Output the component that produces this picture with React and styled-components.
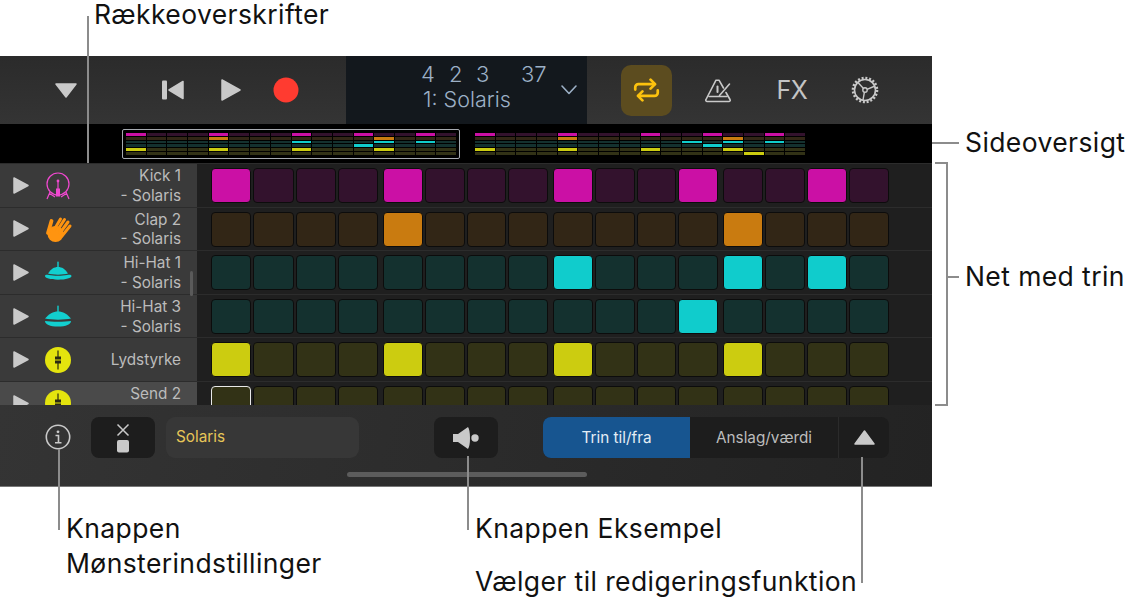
import React from 'react';
import styled, { createGlobalStyle } from 'styled-components';

const GlobalStyle = createGlobalStyle`
  html, body {
    margin: 0;
    padding: 0;
    background: #fff;
    font-family: Inter, "Noto Sans", sans-serif;
  }
`;

const PALETTE = {
  magenta: { on: '#cb10a5', off: '#33122d' },
  orange: { on: '#c97b10', off: '#322616' },
  teal: { on: '#10cccc', off: '#14312f' },
  yellow: { on: '#cccc10', off: '#323216' },
};

const TRACKS = [
  { id: 'kick', lines: ['Kick 1', '- Solaris'], color: 'magenta', icon: 'kick', steps: [0, 4, 8, 11, 14] },
  { id: 'clap', lines: ['Clap 2', '- Solaris'], color: 'orange', icon: 'clap', steps: [4, 12] },
  { id: 'hat1', lines: ['Hi-Hat 1', '- Solaris'], color: 'teal', icon: 'hat', steps: [8, 12, 14] },
  { id: 'hat3', lines: ['Hi-Hat 3', '- Solaris'], color: 'teal', icon: 'hatOpen', steps: [11] },
  { id: 'vol', lines: ['Lydstyrke'], color: 'yellow', icon: 'fader', steps: [0, 4, 8, 12] },
  { id: 'send', lines: ['Send 2', '- Solaris'], color: 'yellow', icon: 'fader', steps: [], selected: true },
];

const OVERVIEW = [
  [
    { color: 'magenta', steps: [0, 4, 8, 11, 14] },
    { color: 'orange', steps: [4, 12] },
    { color: 'teal', steps: [8, 12, 14] },
    { color: 'teal', steps: [11] },
    { color: 'yellow', steps: [0, 4, 8, 12] },
    { color: 'yellow', steps: [] },
  ],
  [
    { color: 'magenta', steps: [0, 4, 8, 11, 14] },
    { color: 'orange', steps: [4, 12] },
    { color: 'teal', steps: [10, 12, 14] },
    { color: 'teal', steps: [11] },
    { color: 'yellow', steps: [0, 4, 8, 12] },
    { color: 'yellow', steps: [13] },
  ],
];

const Page = styled.div`
  position: relative;
  width: 1138px;
  height: 604px;
  overflow: hidden;
  background: #fff;
  color: #111;
`;

const Caption = styled.div`
  font-size: 26.5px;
  letter-spacing: 0.4px;
  line-height: 35px;
  white-space: nowrap;
`;

const TopCaption = styled(Caption)`
  height: 56px;
  padding-left: 94px;
  box-sizing: border-box;
  line-height: 28px;
`;

const Middle = styled.div`
  display: flex;
  height: 430px;
`;

const Device = styled.div`
  width: 932px;
  height: 430px;
  display: flex;
  flex-direction: column;
  background: #1f1f1f;
  box-shadow: 0 1px 0 #777;
`;

const Toolbar = styled.div`
  height: 68px;
  display: flex;
  align-items: center;
  background: linear-gradient(#2b2b2b, #343434);
  flex: none;
`;

const ToolButton = styled.button`
  flex: none;
  width: ${p => p.$w}px;
  margin-left: ${p => p.$ml || 0}px;
  height: 51px;
  padding: 0;
  border: 0;
  border-radius: 10px;
  display: flex;
  align-items: center;
  justify-content: center;
  background: ${p => (p.$active ? '#5c4c1f' : 'transparent')};
  color: #c9c9c9;
  font-family: inherit;
`;

const FxLabel = styled.span`
  font-size: 25px;
  letter-spacing: -0.5px;
  color: #c4c4c4;
`;

const Transport = styled.div`
  flex: none;
  width: 241px;
  height: 68px;
  margin-left: 47px;
  position: relative;
  background: #13181d;
  color: #9cb0c6;
  display: flex;
  flex-direction: column;
  align-items: flex-start;
  justify-content: flex-start;
  padding: 5px 0 0 75px;
  box-sizing: border-box;
`;

const Counter = styled.div`
  display: grid;
  grid-template-columns: 28px 27px 45px auto;
  font-size: 22px;
  line-height: 26px;
  font-weight: 300;
`;

const SongName = styled.div`
  font-size: 21.5px;
  line-height: 25px;
  font-weight: 300;
  margin-left: 2px;
`;

const Chevron = styled.svg`
  position: absolute;
  right: 9px;
  top: 28px;
`;

const OverviewBar = styled.div`
  flex: none;
  height: 39px;
  background: #000;
  display: flex;
  padding-left: 122px;
  gap: 11px;
`;

const OverviewPage = styled.div`
  width: 338px;
  height: 30px;
  margin-top: 5px;
  box-sizing: border-box;
  padding: 3px 3px;
  border: 1px solid ${p => (p.$current ? '#a6aab0' : 'transparent')};
  border-radius: 2px;
  display: flex;
  flex-direction: column;
  gap: 1px;
`;

const OverviewRow = styled.div`
  display: grid;
  grid-template-columns: repeat(16, 1fr);
  gap: 1px;
  height: 3px;
`;

const OverviewCell = styled.div`
  background: ${p => (p.$on ? PALETTE[p.$color].on : PALETTE[p.$color].off)};
`;

const TrackArea = styled.div`
  flex: none;
  height: 242px;
  overflow: hidden;
  position: relative;
`;

const TrackRow = styled.div`
  height: 43.6px;
  display: flex;
  box-sizing: border-box;
  border-top: 1px solid #2c2c2c;
`;

const RowHeader = styled.div`
  flex: none;
  width: 197px;
  height: 100%;
  box-sizing: border-box;
  padding-right: 16px;
  display: flex;
  align-items: center;
  background: ${p => (p.$selected ? '#4a4a4a' : '#3a3a3a')};
`;

const PlayMark = styled.div`
  flex: none;
  margin-left: 13px;
  display: flex;
`;

const IconSlot = styled.div`
  flex: none;
  display: flex;
  width: 32px;
  height: 32px;
  margin-left: 13px;
`;

const TrackName = styled.div`
  flex: 1;
  padding-top: 1px;
  text-align: right;
  font-size: 15.3px;
  line-height: 19.6px;
  color: #bcbcbc;
  white-space: nowrap;
`;

const Steps = styled.div`
  flex: none;
  width: 678px;
  margin-left: 14px;
  padding-top: 4px;
  box-sizing: border-box;
  display: grid;
  grid-template-columns: 167px 165px 165px 166px;
  column-gap: 5px;
`;

const StepGroup = styled.div`
  display: grid;
  grid-template-columns: repeat(4, 1fr);
  column-gap: 2px;
`;

const Step = styled.div`
  height: 35px;
  box-sizing: border-box;
  border-radius: 4px;
  border: 1px solid ${p => (p.$cursor ? '#e8e8e8' : '#0c0c0c')};
  background: ${p => (p.$on ? PALETTE[p.$color].on : PALETTE[p.$color].off)};
`;

const ScrollThumb = styled.div`
  position: absolute;
  left: 190px;
  top: 108px;
  width: 3px;
  height: 25px;
  border-radius: 2px;
  background: #5a5a5a;
`;

const BottomBar = styled.div`
  flex: 1;
  position: relative;
  display: flex;
  align-items: flex-start;
  padding-top: 12px;
  box-sizing: border-box;
  background: linear-gradient(100deg, #343434, #232323);
`;

const InfoSlot = styled.div`
  flex: none;
  width: 26px;
  height: 40px;
  margin-left: 45px;
  display: flex;
  align-items: center;
`;

const DarkButton = styled.div`
  flex: none;
  width: 64px;
  height: 41px;
  margin-left: ${p => p.$ml}px;
  border-radius: 8px;
  background: #1d1d1d;
  display: flex;
  align-items: center;
  justify-content: center;
`;

const NameField = styled.div`
  flex: none;
  width: 193px;
  height: 41px;
  margin-left: 11px;
  padding-left: 10px;
  box-sizing: border-box;
  border-radius: 9px;
  background: #373737;
  color: #e6c658;
  font-size: 15.3px;
  line-height: 40px;
`;

const Segmented = styled.div`
  flex: none;
  width: 346px;
  height: 41px;
  margin-left: 45px;
  display: flex;
  border-radius: 8px;
  overflow: hidden;
  background: #1d1d1d;
  font-size: 15.3px;
`;

const Segment = styled.div`
  flex: none;
  width: ${p => p.$w}px;
  display: flex;
  align-items: center;
  justify-content: center;
  background: ${p => (p.$active ? '#175590' : 'transparent')};
  color: ${p => (p.$active ? '#e4edf5' : '#bcbcbc')};
  border-left: ${p => (p.$divider ? '1px solid #2b2b2b' : '0')};
  box-sizing: border-box;
`;

const HomeBar = styled.div`
  position: absolute;
  left: 347px;
  top: 67px;
  width: 240px;
  height: 5px;
  border-radius: 3px;
  background: #5c5c5c;
`;

const SideNotes = styled.div`
  flex: 1;
  padding: 69px 0 0 33px;
`;

const SideNote = styled(Caption)`
  margin-bottom: ${p => p.$mb || 0}px;
`;

const Footer = styled.div`
  display: grid;
  grid-template-columns: 409px 1fr;
  padding: 25px 0 0 66px;
`;

const FooterStack = styled.div`
  display: flex;
  flex-direction: column;
  gap: 18px;
`;

const Leader = styled.div`
  position: absolute;
  left: ${p => p.$x}px;
  top: ${p => p.$y}px;
  width: ${p => p.$w}px;
  height: ${p => p.$h}px;
  background: #8c8c8c;
`;

const Bracket = styled.div`
  position: absolute;
  left: 935px;
  top: 162px;
  width: 11px;
  height: 240px;
  border: 2px solid #8c8c8c;
  border-left: 0;
`;

const Triangle = ({ w, h, dir = 'right', color = '#c9c9c9' }) => {
  const points = {
    right: `1,1 ${w - 1},${h / 2} 1,${h - 1}`,
    down: `1,1 ${w - 1},1 ${w / 2},${h - 1}`,
    up: `${w / 2},1 ${w - 1},${h - 1} 1,${h - 1}`,
  }[dir];
  return (
    <svg width={w} height={h} viewBox={`0 0 ${w} ${h}`}>
      <polygon points={points} fill={color} stroke={color} strokeWidth="1.5" strokeLinejoin="round" />
    </svg>
  );
};

const SkipBack = () => (
  <svg width="24" height="22" viewBox="0 0 24 22">
    <rect x="1" y="1.5" width="5" height="19" rx="1" fill="#c9c9c9" />
    <polygon points="22,2.5 22,19.5 8,11" fill="#c9c9c9" stroke="#c9c9c9" strokeWidth="1.5" strokeLinejoin="round" />
  </svg>
);

const LoopIcon = () => (
  <svg width="27" height="24" viewBox="0 0 30 26" fill="none" stroke="#fcc20e" strokeWidth="3" strokeLinecap="round" strokeLinejoin="round">
    <path d="M2.5 12.5 V10 a3.5 3.5 0 0 1 3.5 -3.5 H24" />
    <path d="M19.5 1.5 L24.5 6.5 L19.5 11.5" />
    <path d="M27.5 13.5 V16 a3.5 3.5 0 0 1 -3.5 3.5 H6" />
    <path d="M10.5 14.5 L5.5 19.5 L10.5 24.5" />
  </svg>
);

const MetronomeIcon = () => (
  <svg width="28" height="26" viewBox="0 0 28 26" fill="none" stroke="#c9c9c9" strokeWidth="1.6" strokeLinecap="round" strokeLinejoin="round">
    <path d="M18.5 11 L14 3.2 H11 L1 22.5 A1.3 1.3 0 0 0 2.2 24.5 H23.8 A1.3 1.3 0 0 0 25 22.5 L21 15.5" />
    <path d="M4 19.5 H22" />
    <path d="M12.5 9.5 V15" strokeWidth="2" />
    <path d="M14.5 18.5 L24.5 7" />
  </svg>
);

const GearIcon = () => (
  <svg width="28" height="28" viewBox="0 0 28 28" fill="none" stroke="#c9c9c9">
    <circle cx="14" cy="14" r="10.5" strokeWidth="1.6" />
    <circle cx="14" cy="14" r="12" strokeWidth="2.6" strokeDasharray="2 1.77" />
    <circle cx="14" cy="14" r="2.2" strokeWidth="1.4" />
    <path d="M16 13.3 L24 10 M12.5 12.5 L6.5 6 M13.4 16.2 L12 24" strokeWidth="1.4" />
  </svg>
);

const KickIcon = () => (
  <svg width="32" height="32" viewBox="0 0 32 32" fill="none" stroke="#f048d0">
    <circle cx="16" cy="15" r="11" strokeWidth="1.2" />
    <rect x="14" y="19.5" width="4" height="8" fill="#f048d0" stroke="none" />
    <path d="M16 12 V20" strokeWidth="1.2" />
    <circle cx="16" cy="12" r="1.4" fill="#f048d0" stroke="none" />
    <path d="M8 23 L5 30 M24 23 L27 30 M7 24 L13 28 M25 24 L19 28" strokeWidth="1.2" />
  </svg>
);

const ClapIcon = () => (
  <svg width="32" height="32" viewBox="0 0 32 32" fill="none" stroke="#ff9410" strokeLinecap="round">
    <circle cx="13.5" cy="21" r="8" fill="#ff9410" stroke="none" />
    <path d="M6 20 L9.5 8" strokeWidth="3.8" />
    <path d="M12 17 L18.5 6" strokeWidth="3" />
    <path d="M15 18 L22.5 6.5" strokeWidth="3" />
    <path d="M18 20 L26 9" strokeWidth="3" />
    <path d="M20 23 L28 13" strokeWidth="3" />
  </svg>
);

const HatIcon = () => (
  <svg width="32" height="32" viewBox="0 0 32 32" fill="#12cfcf">
    <rect x="15.3" y="5.5" width="1.4" height="7" rx="0.6" />
    <path d="M6 17.5 C9 13 12 11 16 11 C20 11 23 13 26 17.5 C22 19 10 19 6 17.5 Z" />
    <path d="M3 20 C3 18.5 5 18.5 7 19 C12 20 20 20 25 19 C27 18.5 29.5 18.5 29.5 20 C29.5 22 24 23.7 16 23.7 C8 23.7 3 22 3 20 Z" />
  </svg>
);

const OpenHatIcon = () => (
  <svg width="32" height="32" viewBox="0 0 32 32" fill="#12cfcf">
    <rect x="15.3" y="5.5" width="1.4" height="7" rx="0.6" />
    <path d="M3 18.5 C7 14 11 11.5 16 11.5 C21 11.5 25 14 29 18.5 C23 20 9 20 3 18.5 Z" />
    <path d="M3 21 C9 22 23 22 29 21 C29 24.5 24 26.5 16 26.5 C8 26.5 3 24.5 3 21 Z" />
  </svg>
);

const FaderIcon = () => (
  <svg width="32" height="32" viewBox="0 0 32 32">
    <circle cx="16" cy="16" r="13" fill="#e4e40e" />
    <path d="M16 6.5 V25.5" stroke="#2b2b12" strokeWidth="1.2" />
    <rect x="13" y="12.5" width="6" height="7" fill="#2b2b12" />
    <path d="M13 16 H19" stroke="#e4e40e" strokeWidth="1" />
  </svg>
);

const TRACK_ICONS = {
  kick: <KickIcon />,
  clap: <ClapIcon />,
  hat: <HatIcon />,
  hatOpen: <OpenHatIcon />,
  fader: <FaderIcon />,
};

const InfoIcon = () => (
  <svg width="26" height="26" viewBox="0 0 26 26" fill="none" stroke="#c9c9c9">
    <circle cx="13" cy="13" r="11.7" strokeWidth="1.6" />
    <circle cx="13" cy="7.8" r="1.4" fill="#c9c9c9" stroke="none" />
    <path d="M10.5 11.5 H13.5 V18.5 M10 18.7 H16.5" strokeWidth="1.6" />
  </svg>
);

const ClearIcon = () => (
  <svg width="16" height="30" viewBox="0 0 16 30" fill="none">
    <path d="M2.5 1.5 L13.5 12.5 M13.5 1.5 L2.5 12.5" stroke="#c9c9c9" strokeWidth="1.5" />
    <rect x="2" y="17" width="12" height="12.5" rx="2" fill="#c9c9c9" />
  </svg>
);

const PreviewIcon = () => (
  <svg width="26" height="24" viewBox="0 0 26 24" fill="#c9c9c9">
    <path d="M0 8 H5 L15 1 Q17 4 17 12 Q17 20 15 23 L5 16 H0 Z" />
    <circle cx="22" cy="12" r="3.7" />
  </svg>
);

const Overview = () => (
  <OverviewBar>
    {OVERVIEW.map((rows, pageIndex) => (
      <OverviewPage key={pageIndex} $current={pageIndex === 0}>
        {rows.map((row, rowIndex) => (
          <OverviewRow key={rowIndex}>
            {Array.from({ length: 16 }, (_, i) => (
              <OverviewCell key={i} $color={row.color} $on={row.steps.includes(i)} />
            ))}
          </OverviewRow>
        ))}
      </OverviewPage>
    ))}
  </OverviewBar>
);

const Track = ({ track }) => (
  <TrackRow>
    <RowHeader $selected={track.selected}>
      <PlayMark>
        <Triangle w={16} h={17} />
      </PlayMark>
      <IconSlot>{TRACK_ICONS[track.icon]}</IconSlot>
      <TrackName>
        {track.lines.map(line => (
          <div key={line}>{line}</div>
        ))}
      </TrackName>
    </RowHeader>
    <Steps>
      {[0, 1, 2, 3].map(group => (
        <StepGroup key={group}>
          {[0, 1, 2, 3].map(n => {
            const index = group * 4 + n;
            return (
              <Step
                key={n}
                $color={track.color}
                $on={track.steps.includes(index)}
                $cursor={track.selected && index === 0}
              />
            );
          })}
        </StepGroup>
      ))}
    </Steps>
  </TrackRow>
);

export default function App() {
  return (
    <Page>
      <GlobalStyle />
      <TopCaption>Rækkeoverskrifter</TopCaption>
      <Middle>
        <Device>
          <Toolbar>
            <ToolButton $w={26} $ml={53}>
              <Triangle w={22} h={15} dir="down" />
            </ToolButton>
            <ToolButton $w={24} $ml={82}>
              <SkipBack />
            </ToolButton>
            <ToolButton $w={22} $ml={35}>
              <Triangle w={20} h={22} />
            </ToolButton>
            <ToolButton $w={26} $ml={31}>
              <svg width="26" height="26" viewBox="0 0 26 26">
                <circle cx="13" cy="13" r="12.5" fill="#ff3b30" />
              </svg>
            </ToolButton>
            <Transport>
              <Counter>
                <span>4</span>
                <span>2</span>
                <span>3</span>
                <span>37</span>
              </Counter>
              <SongName>1: Solaris</SongName>
              <Chevron width="18" height="12" viewBox="0 0 18 12" fill="none" stroke="#9cb0c6" strokeWidth="1.6" strokeLinecap="round" strokeLinejoin="round">
                <path d="M2 2 L9 9.5 L16 2" />
              </Chevron>
            </Transport>
            <ToolButton $w={51} $ml={34} $active>
              <LoopIcon />
            </ToolButton>
            <ToolButton $w={30} $ml={32}>
              <MetronomeIcon />
            </ToolButton>
            <ToolButton $w={36} $ml={40}>
              <FxLabel>FX</FxLabel>
            </ToolButton>
            <ToolButton $w={30} $ml={40}>
              <GearIcon />
            </ToolButton>
          </Toolbar>
          <Overview />
          <TrackArea>
            {TRACKS.map(track => (
              <Track key={track.id} track={track} />
            ))}
            <ScrollThumb />
          </TrackArea>
          <BottomBar>
            <InfoSlot>
              <InfoIcon />
            </InfoSlot>
            <DarkButton $ml={20}>
              <ClearIcon />
            </DarkButton>
            <NameField>Solaris</NameField>
            <DarkButton $ml={75}>
              <PreviewIcon />
            </DarkButton>
            <Segmented>
              <Segment $w={147} $active>Trin til/fra</Segment>
              <Segment $w={148}>Anslag/værdi</Segment>
              <Segment $w={51} $divider>
                <Triangle w={21} h={15} dir="up" />
              </Segment>
            </Segmented>
            <HomeBar />
          </BottomBar>
        </Device>
        <SideNotes>
          <SideNote $mb={99}>Sideoversigt</SideNote>
          <SideNote>Net med trin</SideNote>
        </SideNotes>
      </Middle>
      <Footer>
        <Caption>
          Knappen
          <br />
          Mønsterindstillinger
        </Caption>
        <FooterStack>
          <Caption>Knappen Eksempel</Caption>
          <Caption>Vælger til redigeringsfunktion</Caption>
        </FooterStack>
      </Footer>
      <Leader $x={87} $y={16} $w={2} $h={147} />
      <Leader $x={932} $y={142} $w={27} $h={2} />
      <Bracket />
      <Leader $x={946} $y={276} $w={13} $h={2} />
      <Leader $x={58} $y={449} $w={2} $h={81} />
      <Leader $x={467} $y={456} $w={2} $h={74} />
      <Leader $x={861} $y={457} $w={2} $h={126} />
    </Page>
  );
}
